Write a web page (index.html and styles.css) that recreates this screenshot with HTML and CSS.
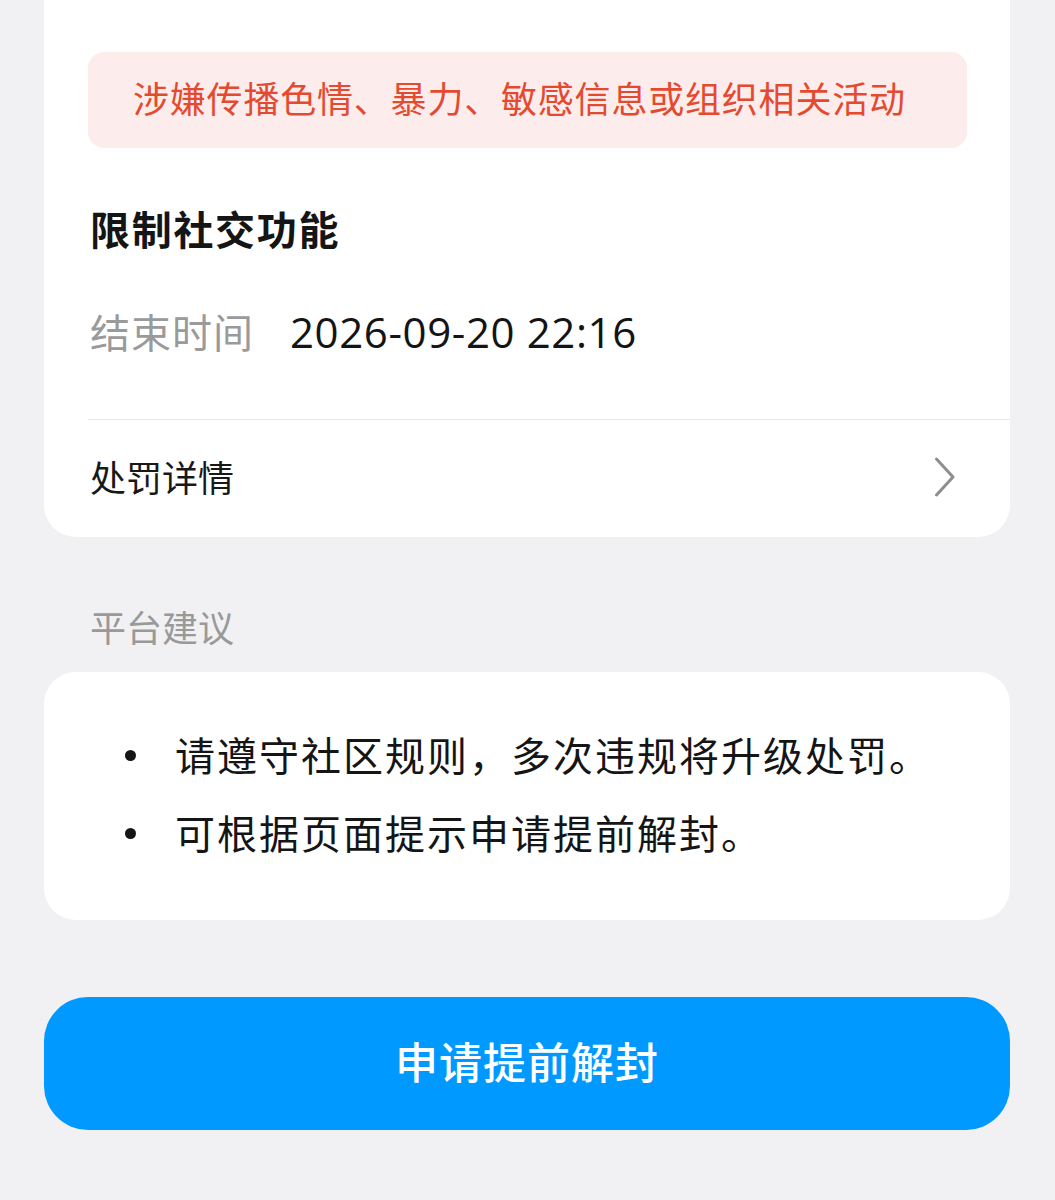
FILE: index.html
```html
<!DOCTYPE html>
<html lang="zh-CN">
<head>
<meta charset="utf-8">
<link rel="stylesheet" href="styles.css">
</head>
<body>
<div class="page">
  <section class="card card-top">
    <div class="banner">涉嫌传播色情、暴力、敏感信息或组织相关活动</div>
    <h2 class="title">限制社交功能</h2>
    <div class="time-row">
      <span class="label">结束时间</span>
      <span class="value">2026-09-20 22:16</span>
    </div>
    <div class="link-row">
      <span class="link-text">处罚详情</span>
      <svg class="chevron" width="22" height="40" viewBox="0 0 22 40"><path d="M2.5 2 L19 20 L2.5 38" fill="none" stroke="#8e8e8e" stroke-width="3" stroke-linecap="round" stroke-linejoin="round"/></svg>
    </div>
  </section>

  <div class="section-label">平台建议</div>

  <section class="card card-tips">
    <ul class="tips">
      <li><span class="dot"></span><span>请遵守社区规则，多次违规将升级处罚。</span></li>
      <li><span class="dot"></span><span>可根据页面提示申请提前解封。</span></li>
    </ul>
  </section>

  <button class="primary">申请提前解封</button>
</div>
</body>
</html>
```
FILE: styles.css
```css
html, body {
  margin: 0;
  padding: 0;
  background: #f1f1f3;
}
body {
  font-family: "Noto Sans CJK SC", "Noto Sans", sans-serif;
  color: #181818;
}
.page {
  padding: 0 45px 0 44px;
  display: flex;
  flex-direction: column;
}
.card {
  background: #ffffff;
  border-radius: 32px;
}
.card-top {
  border-radius: 0 0 32px 32px;
  padding: 52px 0 0 44px;
  display: flex;
  flex-direction: column;
}
.banner {
  margin-right: 43px;
  height: 90px;
  padding-bottom: 6px;
  background: #fdecec;
  border-radius: 16px;
  color: #e34a30;
  font-size: 36px;
  letter-spacing: 0.8px;
  line-height: 90px;
  padding-left: 45px;
}
.title {
  margin: 52px 0 0 2px;
  font-size: 40px;
  font-weight: 700;
  line-height: 56px;
  letter-spacing: 1.7px;
  color: #151515;
}
.time-row {
  margin: 47px 0 0 2px;
  display: flex;
  align-items: center;
  height: 56px;
  font-size: 40px;
}
.label {
  color: #9a9a9a;
  letter-spacing: 1px;
}
.value {
  margin-left: 36px;
  color: #141414;
  font-family: "Open Sans", "Noto Sans", sans-serif;
  font-size: 42px;
  letter-spacing: 0.6px;
}
.link-row {
  margin-top: 60px;
  border-top: 1.5px solid #e6e6e6;
  height: 111px;
  padding: 0 54px 6px 2px;
  display: flex;
  align-items: center;
  justify-content: space-between;
}
.link-text {
  font-size: 36px;
  color: #181818;
}
.chevron {
  display: block;
  margin-top: 3px;
}
.section-label {
  margin: 65px 0 0 46px;
  font-size: 36px;
  line-height: 48px;
  color: #999999;
}
.card-tips {
  margin-top: 22px;
  padding: 43px 40px 49px 0;
}
.tips {
  list-style: none;
  margin: 0;
  padding: 0;
}
.tips li {
  display: flex;
  align-items: center;
  height: 78px;
  font-size: 40px;
  letter-spacing: 2px;
  color: #151515;
}
.dot {
  width: 11px;
  height: 11px;
  border-radius: 50%;
  background: #151515;
  margin: 2px 39px 0 81px;
  flex: none;
}
.primary {
  margin-top: 77px;
  height: 133px;
  padding: 0 0 8px;
  border: none;
  border-radius: 44px;
  background: #0099ff;
  color: #ffffff;
  font-family: "Noto Sans CJK SC", "Noto Sans", sans-serif;
  font-size: 43px;
  font-weight: 500;
  letter-spacing: 1px;
  cursor: pointer;
}
```
